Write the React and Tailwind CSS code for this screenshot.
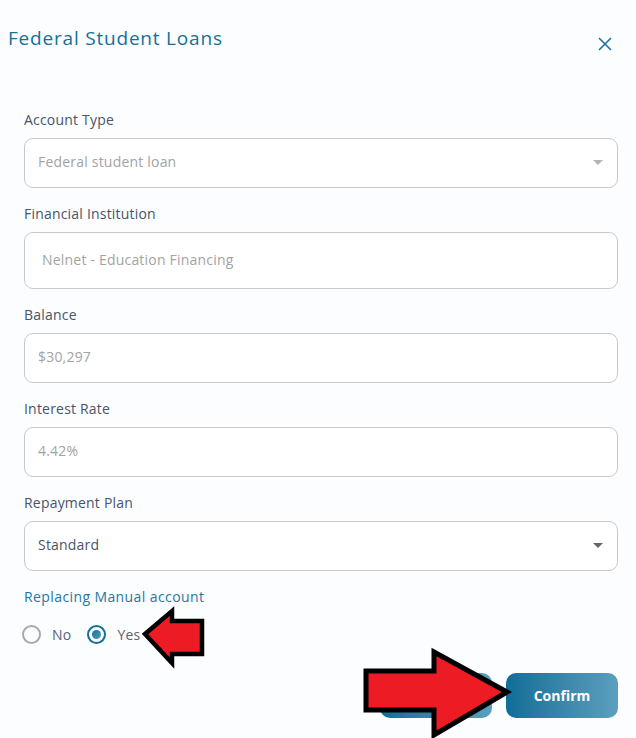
import { useState } from 'react';

const font = { fontFamily: '"Open Sans", "Noto Sans", sans-serif' };

function Field({ label, value, tall, dark, caret }) {
  return (
    <div className="flex flex-col">
      <label className="text-[14px] leading-5 text-[#4a5468] mb-2 tracking-[0.2px]">{label}</label>
      <div
        className={`flex items-center justify-between bg-white border border-[#c9c9c9] rounded-[9px] ${
          tall ? 'h-[57px] pl-[17px]' : 'h-[50px] pl-[13px]'
        } pr-[14px]`}
      >
        <span className={`text-[14px] leading-5 tracking-[0.2px] -mt-[2px] ${dark ? 'text-[#4a5468]' : 'text-[#a3a3a3]'}`}>{value}</span>
        {caret && (
          <svg width="10" height="6" viewBox="0 0 10 6">
            <path d="M0 0 L10 0 L5 5 Z" fill={dark ? '#666' : '#b5b5b5'} />
          </svg>
        )}
      </div>
    </div>
  );
}

function Radio({ checked, label, onClick }) {
  return (
    <button onClick={onClick} className="flex items-center gap-[11px]">
      <span
        className={`w-[19px] h-[19px] rounded-full border-2 flex items-center justify-center ${
          checked ? 'border-[#146f99]' : 'border-[#a5a9b3]'
        }`}
      >
        {checked && <span className="w-[9px] h-[9px] rounded-full bg-gradient-to-br from-[#146f99] to-[#4f9bc0]" />}
      </span>
      <span className="text-[14px] text-[#5a6274] tracking-[0.2px]">{label}</span>
    </button>
  );
}

export default function App() {
  const [replacing, setReplacing] = useState(true);

  return (
    <div className="relative w-[636px] h-[738px] bg-[#fbfdfe] overflow-hidden" style={font}>
      {/* Header */}
      <div className="flex items-start justify-between pl-2 pr-[24px] pt-[24px]">
        <h2 className="text-[19px] leading-7 font-medium text-[#16709a] tracking-[0.8px]">Federal Student Loans</h2>
        <button className="mt-[13px] text-[#1a72a0]">
          <svg width="14" height="14" viewBox="0 0 14 14">
            <path d="M1 1 L13 13 M13 1 L1 13" stroke="currentColor" strokeWidth="1.6" />
          </svg>
        </button>
      </div>

      {/* Form */}
      <div className="flex flex-col gap-4 pl-6 pr-[18px] mt-[58px]">
        <Field label="Account Type" value="Federal student loan" caret />
        <Field label="Financial Institution" value="Nelnet - Education Financing" tall />
        <Field label="Balance" value="$30,297" />
        <Field label="Interest Rate" value="4.42%" />
        <Field label="Repayment Plan" value="Standard" dark caret />
        <div className="flex flex-col">
          <span className="text-[14px] leading-5 text-[#1f77a3] tracking-[0.4px]">Replacing Manual account</span>
          <div className="flex items-center gap-[16px] mt-[17px] -ml-[2px]">
            <Radio label="No" checked={!replacing} onClick={() => setReplacing(false)} />
            <Radio label="Yes" checked={replacing} onClick={() => setReplacing(true)} />
          </div>
        </div>
      </div>

      {/* Footer */}
      <div className="flex justify-end gap-[14px] pr-[18px] mt-[28px]">
        <button className="w-[112px] h-[45px] rounded-[10px] bg-gradient-to-r from-[#0e6d97] to-[#5a9fbd] text-white text-[14px] font-bold">
          Cancel
        </button>
        <button className="w-[112px] h-[45px] rounded-[10px] bg-gradient-to-r from-[#0e6d97] to-[#5a9fbd] text-white text-[14px] font-bold">
          Confirm
        </button>
      </div>

      {/* Annotation arrows */}
      <svg className="absolute left-0 top-0 pointer-events-none" width="636" height="738">
        <path
          d="M145 634 L172 611 L172 621 L202 621 L202 654 L172 654 L172 663 Z"
          fill="#ed1c24"
          stroke="#000"
          strokeWidth="4.5"
          strokeLinejoin="miter"
        />
        <path
          d="M507 692 L434 652 L434 671 L366 671 L366 710 L434 710 L434 735 Z"
          fill="#ed1c24"
          stroke="#000"
          strokeWidth="5"
          strokeLinejoin="miter"
        />
      </svg>
    </div>
  );
}
